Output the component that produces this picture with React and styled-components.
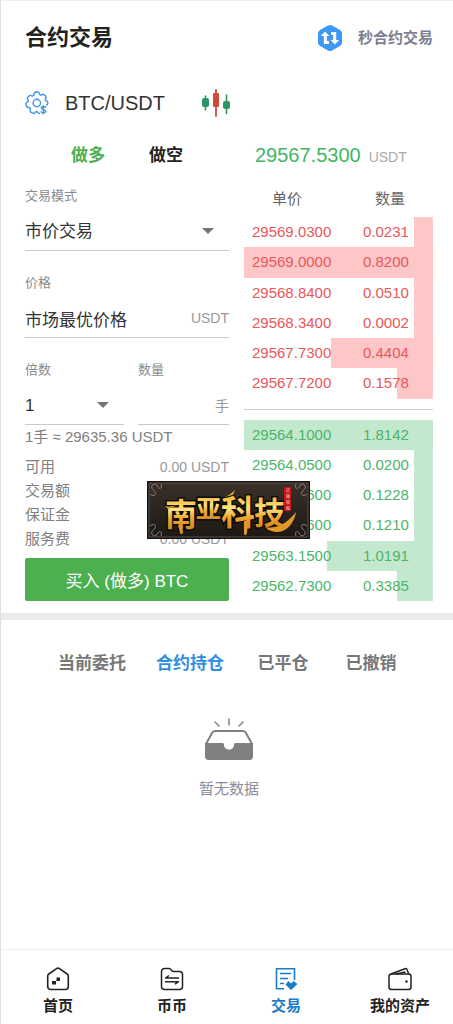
import React, { useState } from "react";
import styled, { createGlobalStyle } from "styled-components";

const asks = [
	{ id: 1, price: "29569.0300", amount: "0.0231", depth: 10 },
	{ id: 2, price: "29569.0000", amount: "0.8200", depth: 100 },
	{ id: 3, price: "29568.8400", amount: "0.0510", depth: 10 },
	{ id: 4, price: "29568.3400", amount: "0.0002", depth: 10 },
	{ id: 5, price: "29567.7300", amount: "0.4404", depth: 54 },
	{ id: 6, price: "29567.7200", amount: "0.1578", depth: 19 },
];

const bids = [
	{ id: 1, price: "29564.1000", amount: "1.8142", depth: 100 },
	{ id: 2, price: "29564.0500", amount: "0.0200", depth: 10 },
	{ id: 3, price: "29563.8600", amount: "0.1228", depth: 10 },
	{ id: 4, price: "29563.3600", amount: "0.1210", depth: 10 },
	{ id: 5, price: "29563.1500", amount: "1.0191", depth: 56 },
	{ id: 6, price: "29562.7300", amount: "0.3385", depth: 19 },
];

const summary = ["可用", "交易额", "保证金", "服务费"];
const orderTabs = ["当前委托", "合约持仓", "已平仓", "已撤销"];

const SwapIcon = () => (
	<svg width="26" height="28" viewBox="0 0 26 28">
		<path
			d="M11 1.6a4 4 0 0 1 4 0l8 4.5a4 4 0 0 1 2 3.4v9a4 4 0 0 1-2 3.4l-8 4.5a4 4 0 0 1-4 0l-8-4.5a4 4 0 0 1-2-3.4v-9a4 4 0 0 1 2-3.4z"
			fill="#3d97f5"
		/>
		<path d="M8 7.500l4.500 4.600H9.900v5H12v2.900H6.800v-7.900H3.800z" fill="#fff" />
		<path d="M18 20.500l-4.500-4.600h2.600v-5H14V8h5.200v7.900h3z" fill="#fff" />
	</svg>
);

const GearIcon = () => (
	<svg width="24" height="24" viewBox="0 0 24 24" fill="none" stroke="#3d94e8" strokeWidth="1.4" strokeLinecap="round" strokeLinejoin="round">
		<path d="M14.5 22.2c-1.2.6-1.7-.2-2.4-1.3-.4-.6-1-.6-1.4 0-.9 1.5-1.6 2-2.9 1.3l-1.7-.9c-1.3-.7-1.1-1.5-.7-3 .2-1-.7-2-1.7-1.9-1.6.2-2.2-.1-2.5-1.7l-.3-1.5c-.2-1.1.2-1.6 1.4-2.1 1.1-.5 1.3-1.5.6-2.4-.8-1.100-.8-1.8.1-2.8l1-1c.9-.8 1.6-.8 2.7-.1.9.6 2 .1 2.2-1C9.2 1.500 9.6 1 11 1h1.6c1.2 0 1.7.5 1.9 1.8.2 1.1 1.3 1.6 2.2 1 1.2-.8 1.9-.7 2.8.1l1 1c.9.9.8 1.7.1 2.8-.6.9-.2 2 .8 2.3 1.1.4 1.6.8 1.5 1.9 0 1.1-.3 1.7-1.3 2.1" />
		<circle cx="11.8" cy="12" r="3.7" />
		<path d="M20.5 16.200c-1-1.200-4.300-1-4.300.8 0 1.900 4.600 1.200 4.600 3.300 0 1.900-3.700 2-4.700.5M18.400 14.800v8" />
	</svg>
);

const CandleIcon = () => (
	<svg width="28" height="28" viewBox="0 0 28 28">
		<path d="M3.5 7v14M24.500 6v18.500" stroke="#2c9565" strokeWidth="1.6" strokeLinecap="round" />
		<path d="M14 1v26" stroke="#d04a37" strokeWidth="1.8" strokeLinecap="round" />
		<rect x="0" y="9" width="7" height="9" rx="2" fill="#2c9565" />
		<rect x="11" y="4" width="6" height="14" rx="1" fill="#d04a37" />
		<rect x="21" y="12" width="7" height="8" rx="2" fill="#2c9565" />
	</svg>
);

const EmptyIcon = () => (
	<svg width="50" height="44" viewBox="0 0 50 44" fill="none" stroke="#808080" strokeWidth="2">
		<path d="M25 2v6M11 5l4 4M39 5l-4 4" strokeLinecap="round" strokeWidth="1.5" />
		<path d="M2 27l6-11c.8-1.5 1.6-2 3-2h28c1.4 0 2.2.5 3 2l6 11" />
		<path
			d="M1 26h17.500c1.200 0 1.500.7 1.500 2 0 2.500 2 4.500 5 4.500s5-2 5-4.500c0-1.300.3-2 1.500-2H49v13c0 2.500-1 4-3.500 4h-41C2 43 1 41.500 1 39z"
			fill="#808080"
			stroke="none"
		/>
	</svg>
);

const HomeIcon = () => (
	<svg width="24" height="24" viewBox="0 0 24 24" fill="none" stroke="currentColor" strokeWidth="1.6" strokeLinejoin="round">
		<path d="M10.5 1.700 2.800 7a2.500 2.500 0 0 0-1.100 2V19.500a3 3 0 0 0 3 3h14.600a3 3 0 0 0 3-3V9a2.500 2.500 0 0 0-1.100-2L13.500 1.700a2.500 2.500 0 0 0-3 0z" />
		<path d="M10.500 10.500H14V14h-3.500zM6 14h4v3.500H6z" fill="currentColor" stroke="none" />
	</svg>
);

const FolderIcon = () => (
	<svg width="24" height="24" viewBox="0 0 24 24" fill="none" stroke="currentColor" strokeWidth="1.5" strokeLinejoin="round">
		<path d="M1.5 19.500v-15a3 3 0 0 1 3-3h4.800c1.700 0 2.300 3 4.200 3h6a3 3 0 0 1 3 3v12a3 3 0 0 1-3 3h-15a3 3 0 0 1-3-3z" />
		<path d="M19 11H5.500l3.500-2.500M5 14.700h13.500l-3.500 2.500" />
	</svg>
);

const TradeIcon = () => (
	<svg width="24" height="24" viewBox="0 0 24 24" fill="none" stroke="currentColor" strokeWidth="1.6">
		<path d="M20.500 13V1.800h-18v20H10M6 6.500h11M6 11.500h8M6 16.500h4" />
		<path d="M17 23l-5.500-5.500L14.500 14l2.500 2.500 2.500-2.500 4 3z" fill="currentColor" stroke="none" />
	</svg>
);

const WalletIcon = () => (
	<svg width="24" height="24" viewBox="0 0 24 24" fill="none" stroke="currentColor" strokeWidth="1.5" strokeLinejoin="round">
		<rect x="1" y="7" width="22" height="15.5" rx="2.5" />
		<path d="M3 7l14-5.300c1-.4 1.700 0 2 .8L20.800 7M8 7l9.500-2" />
		<circle cx="18.5" cy="14.500" r="1.200" fill="currentColor" stroke="none" />
	</svg>
);

const CompanyLogo = () => (
	<Plate width="163" height="58" viewBox="0 0 163 58">
		<defs>
			<linearGradient id="plate" x1="0" y1="0" x2="0" y2="1">
				<stop offset="0" stopColor="#3a3029" />
				<stop offset="1" stopColor="#1d1815" />
			</linearGradient>
			<linearGradient id="gold" x1="0" y1="0" x2="0" y2="1">
				<stop offset="0.1" stopColor="#f2a91c" />
				<stop offset="0.45" stopColor="#fde27f" />
				<stop offset="0.65" stopColor="#eba52f" />
				<stop offset="1" stopColor="#c47a18" />
			</linearGradient>
		</defs>
		<rect width="163" height="58" fill="#17120f" />
		<rect x="2" y="2" width="159" height="54" fill="url(#plate)" stroke="#5c5049" />
		<g fill="none" stroke="#8b8178">
			<path d="M3 13c3 3 7 1 5-2S4 8 5 5s5-2 6 1 5 1 3-3M160 13c-3 3-7 1-5-2s4-3 3-6-5-2-6 1-5 1-3-3" />
			<path d="M3 45c3-3 7-1 5 2s-4 3-3 6 5 2 6-1 5-1 3 3M160 45c-3-3-7-1-5 2s4 3 3 6-5 2-6-1-5-1-3 3" />
		</g>
		<g fontFamily='"Noto Sans CJK SC", sans-serif' fontWeight="700" stroke="#0d0906" strokeWidth="3" paintOrder="stroke" fill="url(#gold)">
			<text x="18" y="45" fontSize="32">南</text>
			<text x="49" y="37" fontSize="25">亚</text>
			<text x="74" y="44" fontSize="34">科</text>
			<text x="107" y="43" fontSize="31">技</text>
		</g>
		{/* brush tails below the lettering */}
		<g fill="#e0982a">
			<path d="M31 44l4-1 1 9c-2 2-3 1-3-1zM97 40h4l-1 12c-1 3-3 3-3 0z" />
			<path d="M118 46c9 2 20-1 31-15-2 12-10 21-21 20-5-1-8-3-10-5z" />
			<path d="M18 25c5 1 10 0 15-2l-12 5zM73 17c6-1 11-4 15-8l-2 5z" />
		</g>
		<rect x="137" y="6" width="7" height="24" rx="1" fill="#c71517" />
		<g fontFamily='"Noto Sans CJK SC", sans-serif' fontSize="4" fill="#f6d9cf">
			<text x="139" y="11">正</text>
			<text x="139" y="17">版</text>
			<text x="139" y="23">授</text>
			<text x="139" y="29">权</text>
		</g>
	</Plate>
);

const Arrow = () => (
	<ArrowSvg width="12" height="6" viewBox="0 0 12 6">
		<path d="M0 0h12L6 6z" fill="#757575" />
	</ArrowSvg>
);

const navItems = [
	{ name: "首页", icon: <HomeIcon /> },
	{ name: "币币", icon: <FolderIcon /> },
	{ name: "交易", icon: <TradeIcon />, active: true },
	{ name: "我的资产", icon: <WalletIcon /> },
];

const App = () => {
	const [side, setSide] = useState("long");
	const [tab, setTab] = useState("合约持仓");
	const [count, setCount] = useState("");

	const viewOrders = (rows, color, bar) =>
		rows.map((a) => (
			<BookRow key={a.id} $color={color} $bar={bar} style={{ backgroundSize: `${a.depth}% 100%` }}>
				<td>{a.price}</td>
				<td>{a.amount}</td>
			</BookRow>
		));

	return (
		<Page>
			<GlobalStyle />
			<Header>
				<h1>合约交易</h1>
				<SwapLink href="#seconds">
					<SwapIcon />
					<span>秒合约交易</span>
				</SwapLink>
			</Header>
			<SymbolRow>
				<GearIcon />
				<h2>BTC/USDT</h2>
				<CandleIcon />
			</SymbolRow>

			<Trade>
				<Form onSubmit={(e) => e.preventDefault()}>
					<SideTabs>
						<SideButton type="button" $active={side === "long"} onClick={() => setSide("long")}>
							做多
						</SideButton>
						<SideButton type="button" $active={side === "short"} onClick={() => setSide("short")}>
							做空
						</SideButton>
					</SideTabs>
					<Fields>
						<div>
							<Label htmlFor="mode">交易模式</Label>
							<Control>
								<Select id="mode">
									<option>市价交易</option>
									<option>限价交易</option>
								</Select>
								<Arrow />
							</Control>
						</div>
						<div>
							<Label htmlFor="price">价格</Label>
							<Control>
								<Input id="price" value="市场最优价格" readOnly />
								<Unit>USDT</Unit>
							</Control>
						</div>
						<FieldPair>
							<div>
								<Label htmlFor="times">倍数</Label>
								<Control>
									<Select id="times">
										<option>1</option>
										<option>2</option>
									</Select>
									<Arrow />
								</Control>
							</div>
							<div>
								<Label htmlFor="count">数量</Label>
								<Control>
									<Input id="count" value={count} onChange={(e) => setCount(e.target.value)} />
									<Unit>手</Unit>
								</Control>
							</div>
						</FieldPair>
					</Fields>
					<Hint>1手 ≈ 29635.36 USDT</Hint>
					<Summary>
						{summary.map((name) => (
							<SummaryRow key={name}>
								<dt>{name}</dt>
								<dd>0.00 USDT</dd>
							</SummaryRow>
						))}
					</Summary>
					<BuyButton type="submit">买入 (做多) BTC</BuyButton>
				</Form>

				<Market>
					<LastPrice>
						<strong>29567.5300</strong>
						<span>USDT</span>
					</LastPrice>
					<Book>
						<thead>
							<BookHead>
								<th>单价</th>
								<th>数量</th>
							</BookHead>
						</thead>
						<tbody>{viewOrders(asks, "#ea565a", "#fdc7c8")}</tbody>
						<BidBody>{viewOrders(bids, "#4bb568", "#c3e8ce")}</BidBody>
					</Book>
				</Market>
				<CompanyLogo />
			</Trade>

			<OrderTabs>
				{orderTabs.map((name) => (
					<OrderTab key={name} type="button" $active={tab === name} onClick={() => setTab(name)}>
						{name}
					</OrderTab>
				))}
			</OrderTabs>
			<Empty>
				<EmptyIcon />
				<span>暂无数据</span>
			</Empty>

			<Nav>
				{navItems.map((a) => (
					<NavLink key={a.name} href="#nav" $active={a.active}>
						{a.icon}
						<span>{a.name}</span>
					</NavLink>
				))}
			</Nav>
		</Page>
	);
};

export default App;

const GlobalStyle = createGlobalStyle`
	* {
		box-sizing: border-box;
	}
	body {
		margin: 0;
		background: #fff;
		color: #222;
	}
	body, button, input, select {
		font-family: "Liberation Sans", "Noto Sans CJK SC", sans-serif;
	}
	h1, h2, dl, dd {
		margin: 0;
	}
	button {
		padding: 0;
		border: none;
		background: none;
		cursor: pointer;
	}
	a {
		text-decoration: none;
	}
	svg {
		display: block;
		flex-shrink: 0;
	}
`;

const Page = styled.div`
	display: flex;
	flex-direction: column;
	min-height: 100vh;
	border-left: 1px solid #dedede;
	border-top: 1px solid #eee;
	overflow-x: clip;
`;

const Header = styled.header`
	display: flex;
	align-items: center;
	justify-content: space-between;
	height: 73px;
	padding: 0 20px 0 24px;

	h1 {
		font-size: 22px;
		line-height: 32px;
	}
`;

const SwapLink = styled.a`
	display: flex;
	align-items: center;
	gap: 15px;
	color: #7c7f92;
	font-size: 15px;
	font-weight: 700;
	line-height: 24px;
`;

const SymbolRow = styled.div`
	display: flex;
	align-items: center;
	height: 58px;
	padding: 0 24px;

	h2 {
		margin: 0 37px 0 16px;
		font-size: 20px;
		font-weight: 400;
		color: #333;
	}
`;

const Trade = styled.main`
	position: relative;
	display: grid;
	grid-template-columns: 204fr 189fr;
	gap: 15px;
	padding: 6px 20px 12px 24px;
	border-bottom: 7px solid #ebebeb;
`;

const Form = styled.form`
	min-width: 0;
`;

const SideTabs = styled.div`
	display: flex;
	justify-content: center;
	gap: 44px;
	height: 30px;
	margin-bottom: 18px;
`;

const SideButton = styled.button`
	font-size: 17px;
	font-weight: 700;
	color: ${(props) => (props.$active ? "#4caf50" : "#222")};
`;

const Fields = styled.div`
	display: grid;
	gap: 22px;
`;

const FieldPair = styled.div`
	display: grid;
	grid-template-columns: 99fr 91fr;
	gap: 14px;
`;

const Label = styled.label`
	display: block;
	font-size: 13px;
	line-height: 20px;
	color: #8a8a8a;
`;

const Control = styled.div`
	display: flex;
	align-items: center;
	height: 45px;
	padding-top: 6px;
	border-bottom: 1px solid #c9c9c9;
`;

const Select = styled.select`
	flex: 1;
	min-width: 0;
	height: 36px;
	padding: 0;
	border: none;
	outline: none;
	appearance: none;
	background: none;
	font-size: 17px;
	color: #333;
`;

const ArrowSvg = styled.svg`
	margin-right: 15px;
`;

const Input = styled.input`
	flex: 1;
	width: 0;
	min-width: 0;
	height: 36px;
	padding: 0;
	border: none;
	outline: none;
	background: none;
	font-size: 17px;
	color: #333;
`;

const Unit = styled.span`
	font-size: 14px;
	color: #999;
`;

const Hint = styled.div`
	font-size: 15px;
	line-height: 24px;
	color: #808080;
	white-space: nowrap;
`;

const Summary = styled.dl`
	padding: 6px 0 7px;
`;

const SummaryRow = styled.div`
	display: flex;
	justify-content: space-between;
	line-height: 24px;
	color: #808080;

	dt {
		font-size: 15px;
	}

	dd {
		font-size: 14px;
		color: #999;
	}
`;

const BuyButton = styled.button`
	display: block;
	width: 100%;
	height: 43px;
	border-radius: 2px;
	background: #4caf50;
	color: #fff;
	font-size: 17px;
`;

const Market = styled.section`
	display: flex;
	flex-direction: column;
	min-width: 0;
`;

const LastPrice = styled.div`
	display: flex;
	align-items: baseline;
	gap: 8px;
	padding-left: 11px;
	line-height: 34px;

	strong {
		font-size: 20px;
		font-weight: 400;
		color: #43b565;
	}

	span {
		font-size: 14px;
		color: #aaa;
	}
`;

const Book = styled.table`
	display: flex;
	flex-direction: column;
	flex: 1;
	border-spacing: 0;

	thead {
		display: block;
		padding: 7px 0 0;
	}

	tbody {
		display: flex;
		flex-direction: column;
		flex: 1;
	}
`;

const BookHead = styled.tr`
	display: flex;
	justify-content: space-between;
	padding: 0 28px;
	line-height: 36px;

	th {
		padding: 0;
		font-size: 15px;
		font-weight: 400;
		color: #666;
	}
`;

const BookRow = styled.tr`
	display: grid;
	grid-template-columns: 111fr 70fr;
	align-items: center;
	flex: 1;
	padding-left: 8px;
	background: linear-gradient(${(props) => props.$bar}, ${(props) => props.$bar}) right top no-repeat;
	color: ${(props) => props.$color};
	font-size: 15px;
	line-height: 20px;

	td {
		padding: 0;
	}
`;

const BidBody = styled.tbody`
	position: relative;
	margin-top: 21px;

	&::before {
		content: "";
		position: absolute;
		top: -11px;
		width: 100%;
		border-top: 1px solid #ccc;
	}
`;

const Plate = styled.svg`
	position: absolute;
	left: 146px;
	bottom: 74px;
`;

const OrderTabs = styled.div`
	display: flex;
	justify-content: center;
	height: 82px;
	padding-left: 4px;
`;

const OrderTab = styled.button`
	min-width: 88px;
	padding: 0 15px;
	font-size: 17px;
	font-weight: 700;
	white-space: nowrap;
	color: ${(props) => (props.$active ? "#2f8de4" : "#777")};
`;

const Empty = styled.div`
	display: flex;
	flex-direction: column;
	align-items: center;
	gap: 16px;
	padding: 15px 0 60px 4px;
	font-size: 15px;
	line-height: 24px;
	color: #8b8d9a;
`;

const Nav = styled.nav`
	position: sticky;
	bottom: 0;
	display: grid;
	grid-template-columns: repeat(4, 1fr);
	height: 75px;
	margin-top: auto;
	margin-right: -4px;
	border-top: 1px solid #eee;
	background: #fff;
`;

const NavLink = styled.a`
	display: flex;
	flex-direction: column;
	align-items: center;
	gap: 3px;
	padding-top: 17px;
	font-size: 15px;
	font-weight: 700;
	line-height: 24px;
	color: ${(props) => (props.$active ? "#1d7cc9" : "#222")};
`;
